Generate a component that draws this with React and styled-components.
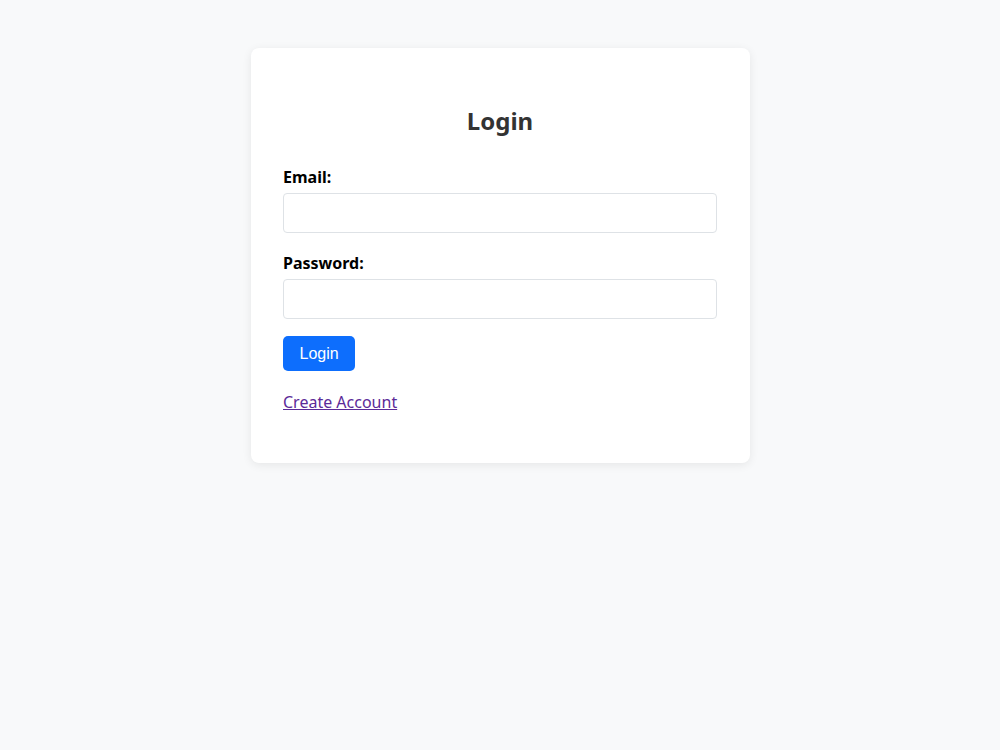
import { createGlobalStyle, styled } from "styled-components";

const GlobalStyle = createGlobalStyle`
  html, body {
    margin: 0;
    padding: 0;
    background: #f8f9fa;
    font-family: "Noto Sans", "Open Sans", sans-serif;
  }
`;

const Page = styled.main`
  display: flex;
  justify-content: center;
  align-items: flex-start;
  padding: 48px 0 0 1px;
  min-height: 750px;
  box-sizing: border-box;
`;

const Card = styled.section`
  width: 499px;
  box-sizing: border-box;
  padding: 33px 33px 32px 32px;
  background: #fff;
  border-radius: 8px;
  box-shadow: 0 2px 10px rgba(0, 0, 0, 0.08);
`;

const Title = styled.h2`
  margin: 25px 0 30px;
  font-size: 24px;
  line-height: 29px;
  font-weight: 700;
  text-align: center;
  color: #333;
`;

const Form = styled.form`
  display: flex;
  flex-direction: column;
  gap: 18px;
`;

const Field = styled.div`
  display: flex;
  flex-direction: column;
  gap: 4px;
`;

const Label = styled.label`
  font-size: 16px;
  line-height: 24px;
  font-weight: 700;
  color: #000;
`;

const Input = styled.input`
  height: 40px;
  box-sizing: border-box;
  border: 1px solid #dee2e6;
  border-radius: 4px;
  padding: 0 10px;
  font-size: 16px;
  background: #fff;
`;

const Button = styled.button`
  align-self: flex-start;
  margin-top: -1px;
  height: 35px;
  padding: 0 16.5px;
  border: none;
  border-radius: 5px;
  background: #0d6efd;
  color: #fff;
  font-family: "Liberation Sans", Arial, sans-serif;
  font-size: 16px;
  cursor: pointer;
`;

const Footer = styled.p`
  margin: 19px 0 17px;
  font-size: 16px;
  line-height: 24px;
`;

const Link = styled.a`
  color: #5b2a98;
  text-decoration: underline;
`;

export default function App() {
  return (
    <>
      <GlobalStyle />
      <Page>
        <Card>
          <Title>Login</Title>
          <Form onSubmit={(e) => e.preventDefault()}>
            <Field>
              <Label htmlFor="email">Email:</Label>
              <Input id="email" type="email" />
            </Field>
            <Field>
              <Label htmlFor="password">Password:</Label>
              <Input id="password" type="password" />
            </Field>
            <Button type="submit">Login</Button>
          </Form>
          <Footer>
            <Link href="#register">Create Account</Link>
          </Footer>
        </Card>
      </Page>
    </>
  );
}
